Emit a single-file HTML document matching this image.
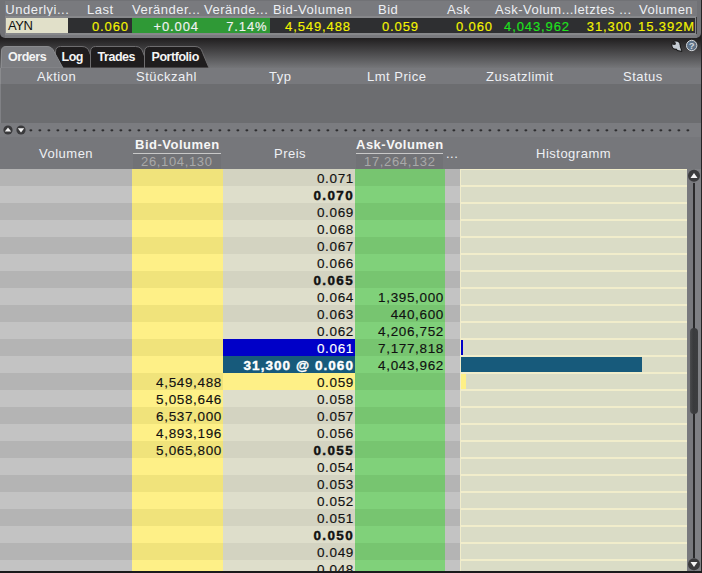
<!DOCTYPE html><html><head><meta charset="utf-8"><style>
*{margin:0;padding:0;box-sizing:border-box}
html,body{width:702px;height:573px;overflow:hidden;background:#1b1b1c}
body{position:relative;font-family:"Liberation Sans",sans-serif;font-size:13px}
.a{position:absolute;white-space:nowrap}
.lbl{color:#eef0f4;letter-spacing:0.5px}
.num{letter-spacing:0.9px}
.bk{font-size:13.5px;letter-spacing:0.65px;-webkit-text-stroke:0.15px currentColor}
.r{text-align:right}
.c{text-align:center}
</style></head><body>
<div class="a" style="left:0;top:0;width:702px;height:68px;background:linear-gradient(#201e1f 0px,#201e1f 38px,#757679 68px)"></div>
<div class="a" style="left:0;top:0;width:701px;height:38px;background:#717276;border-radius:0 0 5px 5px;overflow:hidden"><div class="a" style="left:5px;top:1px;width:692px;height:37px;background:#797a7e"></div></div>
<div class="a lbl" style="left:5.3px;top:1px;line-height:17px">Underlyi...</div>
<div class="a lbl" style="left:87px;top:1px;line-height:17px">Last</div>
<div class="a lbl" style="left:132px;top:1px;line-height:17px">Veränder...</div>
<div class="a lbl" style="left:204px;top:1px;line-height:17px">Verände...</div>
<div class="a lbl" style="left:273px;top:1px;line-height:17px">Bid-Volumen</div>
<div class="a lbl" style="left:378px;top:1px;line-height:17px">Bid</div>
<div class="a lbl" style="left:447px;top:1px;line-height:17px">Ask</div>
<div class="a lbl" style="left:495px;top:1px;line-height:17px">Ask-Volum...</div>
<div class="a lbl" style="left:574px;top:1px;line-height:17px">letztes ...</div>
<div class="a lbl" style="left:639px;top:1px;line-height:17px">Volumen</div>
<div class="a" style="left:5px;top:16px;width:691px;height:19px;background:#87888b"></div>
<div class="a" style="left:696px;top:17px;width:1px;height:17px;background:#3a3a3c"></div>
<div class="a" style="left:6px;top:18px;width:62px;height:15px;background:#e1e0c9"></div>
<div class="a" style="left:68px;top:18px;width:64px;height:15px;background:#2e2f31"></div>
<div class="a" style="left:132px;top:18px;width:138px;height:15px;background:#2f9936"></div>
<div class="a" style="left:270px;top:18px;width:425px;height:15px;background:#2e2f31"></div>
<div class="a" style="left:8px;top:18px;line-height:15px;color:#111;letter-spacing:-0.4px">AYN</div>
<div class="a num r" style="right:573px;top:19px;line-height:15px;color:#f4f400;-webkit-text-stroke:0.15px #f4f400">0.060</div>
<div class="a num r" style="right:503px;top:19px;line-height:15px;color:#f2f2f2;-webkit-text-stroke:0.15px #f2f2f2">+0.004</div>
<div class="a num r" style="right:434.5px;top:19px;line-height:15px;color:#f2f2f2;-webkit-text-stroke:0.15px #f2f2f2">7.14%</div>
<div class="a num r" style="right:351px;top:19px;line-height:15px;color:#f4f400;-webkit-text-stroke:0.15px #f4f400">4,549,488</div>
<div class="a num r" style="right:283px;top:19px;line-height:15px;color:#f4f400;-webkit-text-stroke:0.15px #f4f400">0.059</div>
<div class="a num r" style="right:209px;top:19px;line-height:15px;color:#f4f400;-webkit-text-stroke:0.15px #f4f400">0.060</div>
<div class="a num r" style="right:132px;top:19px;line-height:15px;color:#1ee21e;-webkit-text-stroke:0.15px #1ee21e">4,043,962</div>
<div class="a num r" style="right:70px;top:19px;line-height:15px;color:#f4f400;-webkit-text-stroke:0.15px #f4f400">31,300</div>
<div class="a num r" style="right:7px;top:19px;line-height:15px;color:#f4f400;-webkit-text-stroke:0.15px #f4f400">15.392M</div>
<svg class="a" style="left:0;top:0" width="702" height="70"><path d="M55.5,68 L55.5,52 Q55.5,46.5 60.5,46.5 L82,46.5 Q88,46.5 89.5,52.5 L96,68 Z" fill="#1f1d1e" stroke="#6e6d6f" stroke-width="1"/><path d="M90.5,68 L90.5,52 Q90.5,46.5 95.5,46.5 L135.5,46.5 Q141.5,46.5 143.0,52.5 L149.5,68 Z" fill="#1f1d1e" stroke="#6e6d6f" stroke-width="1"/><path d="M144.5,68 L144.5,52 Q144.5,46.5 149.5,46.5 L195,46.5 Q201,46.5 202.5,52.5 L209,68 Z" fill="#1f1d1e" stroke="#6e6d6f" stroke-width="1"/><path d="M1.5,68 L1.5,51 Q1.5,46.5 6,46.5 L47,46.5 Q52,46.5 54,51.5 L63,68 Z" fill="#7b7c80" stroke="#8a8b8e" stroke-width="1"/></svg>
<div class="a" style="left:8px;top:49px;line-height:17px;font-size:12.5px;letter-spacing:-0.45px;color:#f4f4f4;font-weight:bold">Orders</div>
<div class="a" style="left:61.5px;top:49px;line-height:17px;font-size:12.5px;letter-spacing:-0.45px;color:#f4f4f4;font-weight:bold">Log</div>
<div class="a" style="left:97.5px;top:49px;line-height:17px;font-size:12.5px;letter-spacing:-0.45px;color:#f4f4f4;font-weight:bold">Trades</div>
<div class="a" style="left:151.5px;top:49px;line-height:17px;font-size:12.5px;letter-spacing:-0.45px;color:#f4f4f4;font-weight:bold">Portfolio</div>
<svg class="a" style="left:666px;top:36px" width="36" height="20"><g stroke="#161616" stroke-width="1.6" stroke-linejoin="round"><circle cx="10" cy="9.2" r="3.8" fill="#161616"/><path d="M9.5,10.5 L13.2,9 L15.5,15 L11.5,14.2 Z" fill="#161616"/></g><circle cx="10" cy="9.2" r="3.6" fill="#c5ccd3"/><path d="M9.5,10.5 L13.2,9 L15.3,14.8 L11.5,14.1 Z" fill="#c5ccd3"/><circle cx="8.2" cy="7.4" r="1.7" fill="#262526"/><path d="M5.5,5.2 L8.2,7.4 L6,8.5 Z" fill="#262526"/><circle cx="25.7" cy="9.5" r="5.2" fill="#5d7187" stroke="#d6d8da" stroke-width="1"/><text x="25.7" y="13" text-anchor="middle" font-family="Liberation Sans" font-weight="bold" font-size="9.5" fill="#cfd6de">?</text></svg>
<div class="a" style="left:0;top:68px;width:702px;height:16px;background:#78797d;border-left:1px solid #8a8b8e"></div>
<div class="a lbl" style="left:37px;top:69px;line-height:16px">Aktion</div>
<div class="a lbl" style="left:136px;top:69px;line-height:16px">Stückzahl</div>
<div class="a lbl" style="left:269px;top:69px;line-height:16px">Typ</div>
<div class="a lbl" style="left:367px;top:69px;line-height:16px">Lmt Price</div>
<div class="a lbl" style="left:486px;top:69px;line-height:16px">Zusatzlimit</div>
<div class="a lbl" style="left:623px;top:69px;line-height:16px">Status</div>
<div class="a" style="left:0;top:84px;width:702px;height:39px;background:#6c6d70;border-left:1px solid #808185"></div>
<div class="a" style="left:0;top:123px;width:702px;height:14px;background:#7b7c80"></div>
<svg class="a" style="left:2.5px;top:124.7px" width="10" height="10"><circle cx="5" cy="5" r="4.6" fill="#3a3a3c"/><path transform="translate(5,5)" d="M-3.2,1.6 L3.2,1.6 L0,-2.6 Z" fill="#f4f4f4"/></svg>
<svg class="a" style="left:15.5px;top:124.7px" width="10" height="10"><circle cx="5" cy="5" r="4.6" fill="#3a3a3c"/><path transform="translate(5,5)" d="M-3.2,-1.8 L3.2,-1.8 L0,2.4 Z" fill="#f4f4f4"/></svg>
<svg class="a" style="left:0;top:0" width="702" height="140"><ellipse cx="30.9" cy="130.3" rx="1.5" ry="1.1" fill="#2e2e30"/><ellipse cx="39.9" cy="130.3" rx="1.5" ry="1.1" fill="#2e2e30"/><ellipse cx="48.9" cy="130.3" rx="1.5" ry="1.1" fill="#2e2e30"/><ellipse cx="57.9" cy="130.3" rx="1.5" ry="1.1" fill="#2e2e30"/><ellipse cx="66.9" cy="130.3" rx="1.5" ry="1.1" fill="#2e2e30"/><ellipse cx="75.9" cy="130.3" rx="1.5" ry="1.1" fill="#2e2e30"/><ellipse cx="84.9" cy="130.3" rx="1.5" ry="1.1" fill="#2e2e30"/><ellipse cx="93.9" cy="130.3" rx="1.5" ry="1.1" fill="#2e2e30"/><ellipse cx="102.9" cy="130.3" rx="1.5" ry="1.1" fill="#2e2e30"/><ellipse cx="111.9" cy="130.3" rx="1.5" ry="1.1" fill="#2e2e30"/><ellipse cx="120.9" cy="130.3" rx="1.5" ry="1.1" fill="#2e2e30"/><ellipse cx="129.9" cy="130.3" rx="1.5" ry="1.1" fill="#2e2e30"/><ellipse cx="138.9" cy="130.3" rx="1.5" ry="1.1" fill="#2e2e30"/><ellipse cx="147.9" cy="130.3" rx="1.5" ry="1.1" fill="#2e2e30"/><ellipse cx="156.9" cy="130.3" rx="1.5" ry="1.1" fill="#2e2e30"/><ellipse cx="165.9" cy="130.3" rx="1.5" ry="1.1" fill="#2e2e30"/><ellipse cx="174.9" cy="130.3" rx="1.5" ry="1.1" fill="#2e2e30"/><ellipse cx="183.9" cy="130.3" rx="1.5" ry="1.1" fill="#2e2e30"/><ellipse cx="192.9" cy="130.3" rx="1.5" ry="1.1" fill="#2e2e30"/><ellipse cx="201.9" cy="130.3" rx="1.5" ry="1.1" fill="#2e2e30"/><ellipse cx="210.9" cy="130.3" rx="1.5" ry="1.1" fill="#2e2e30"/><ellipse cx="219.9" cy="130.3" rx="1.5" ry="1.1" fill="#2e2e30"/><ellipse cx="228.9" cy="130.3" rx="1.5" ry="1.1" fill="#2e2e30"/><ellipse cx="237.9" cy="130.3" rx="1.5" ry="1.1" fill="#2e2e30"/><ellipse cx="246.9" cy="130.3" rx="1.5" ry="1.1" fill="#2e2e30"/><ellipse cx="255.9" cy="130.3" rx="1.5" ry="1.1" fill="#2e2e30"/><ellipse cx="264.9" cy="130.3" rx="1.5" ry="1.1" fill="#2e2e30"/><ellipse cx="273.9" cy="130.3" rx="1.5" ry="1.1" fill="#2e2e30"/><ellipse cx="282.9" cy="130.3" rx="1.5" ry="1.1" fill="#2e2e30"/><ellipse cx="291.9" cy="130.3" rx="1.5" ry="1.1" fill="#2e2e30"/><ellipse cx="300.9" cy="130.3" rx="1.5" ry="1.1" fill="#2e2e30"/><ellipse cx="309.9" cy="130.3" rx="1.5" ry="1.1" fill="#2e2e30"/><ellipse cx="318.9" cy="130.3" rx="1.5" ry="1.1" fill="#2e2e30"/><ellipse cx="327.9" cy="130.3" rx="1.5" ry="1.1" fill="#2e2e30"/><ellipse cx="336.9" cy="130.3" rx="1.5" ry="1.1" fill="#2e2e30"/><ellipse cx="345.9" cy="130.3" rx="1.5" ry="1.1" fill="#2e2e30"/><ellipse cx="354.9" cy="130.3" rx="1.5" ry="1.1" fill="#2e2e30"/><ellipse cx="363.9" cy="130.3" rx="1.5" ry="1.1" fill="#2e2e30"/><ellipse cx="372.9" cy="130.3" rx="1.5" ry="1.1" fill="#2e2e30"/><ellipse cx="381.9" cy="130.3" rx="1.5" ry="1.1" fill="#2e2e30"/><ellipse cx="390.9" cy="130.3" rx="1.5" ry="1.1" fill="#2e2e30"/><ellipse cx="399.9" cy="130.3" rx="1.5" ry="1.1" fill="#2e2e30"/><ellipse cx="408.9" cy="130.3" rx="1.5" ry="1.1" fill="#2e2e30"/><ellipse cx="417.9" cy="130.3" rx="1.5" ry="1.1" fill="#2e2e30"/><ellipse cx="426.9" cy="130.3" rx="1.5" ry="1.1" fill="#2e2e30"/><ellipse cx="435.9" cy="130.3" rx="1.5" ry="1.1" fill="#2e2e30"/><ellipse cx="444.9" cy="130.3" rx="1.5" ry="1.1" fill="#2e2e30"/><ellipse cx="453.9" cy="130.3" rx="1.5" ry="1.1" fill="#2e2e30"/><ellipse cx="462.9" cy="130.3" rx="1.5" ry="1.1" fill="#2e2e30"/><ellipse cx="471.9" cy="130.3" rx="1.5" ry="1.1" fill="#2e2e30"/><ellipse cx="480.9" cy="130.3" rx="1.5" ry="1.1" fill="#2e2e30"/><ellipse cx="489.9" cy="130.3" rx="1.5" ry="1.1" fill="#2e2e30"/><ellipse cx="498.9" cy="130.3" rx="1.5" ry="1.1" fill="#2e2e30"/><ellipse cx="507.9" cy="130.3" rx="1.5" ry="1.1" fill="#2e2e30"/><ellipse cx="516.9" cy="130.3" rx="1.5" ry="1.1" fill="#2e2e30"/><ellipse cx="525.9" cy="130.3" rx="1.5" ry="1.1" fill="#2e2e30"/><ellipse cx="534.9" cy="130.3" rx="1.5" ry="1.1" fill="#2e2e30"/><ellipse cx="543.9" cy="130.3" rx="1.5" ry="1.1" fill="#2e2e30"/><ellipse cx="552.9" cy="130.3" rx="1.5" ry="1.1" fill="#2e2e30"/><ellipse cx="561.9" cy="130.3" rx="1.5" ry="1.1" fill="#2e2e30"/><ellipse cx="570.9" cy="130.3" rx="1.5" ry="1.1" fill="#2e2e30"/><ellipse cx="579.9" cy="130.3" rx="1.5" ry="1.1" fill="#2e2e30"/><ellipse cx="588.9" cy="130.3" rx="1.5" ry="1.1" fill="#2e2e30"/><ellipse cx="597.9" cy="130.3" rx="1.5" ry="1.1" fill="#2e2e30"/><ellipse cx="606.9" cy="130.3" rx="1.5" ry="1.1" fill="#2e2e30"/><ellipse cx="615.9" cy="130.3" rx="1.5" ry="1.1" fill="#2e2e30"/><ellipse cx="624.9" cy="130.3" rx="1.5" ry="1.1" fill="#2e2e30"/><ellipse cx="633.9" cy="130.3" rx="1.5" ry="1.1" fill="#2e2e30"/><ellipse cx="642.9" cy="130.3" rx="1.5" ry="1.1" fill="#2e2e30"/><ellipse cx="651.9" cy="130.3" rx="1.5" ry="1.1" fill="#2e2e30"/><ellipse cx="660.9" cy="130.3" rx="1.5" ry="1.1" fill="#2e2e30"/><ellipse cx="669.9" cy="130.3" rx="1.5" ry="1.1" fill="#2e2e30"/><ellipse cx="678.9" cy="130.3" rx="1.5" ry="1.1" fill="#2e2e30"/><ellipse cx="687.9" cy="130.3" rx="1.5" ry="1.1" fill="#2e2e30"/></svg>
<div class="a" style="left:0;top:137px;width:702px;height:32px;background:#76777b"></div>
<div class="a lbl" style="left:39px;top:146px;line-height:16px">Volumen</div>
<div class="a" style="left:135px;top:137px;line-height:16px;color:#f6f6f6;font-weight:bold;letter-spacing:0.5px">Bid-Volumen</div>
<div class="a" style="left:133px;top:153px;width:88px;height:1px;background:#c8c8c8"></div>
<div class="a" style="left:133px;top:154px;width:88px;height:15px;background:#717276"></div>
<div class="a num" style="left:141px;top:154px;line-height:15px;color:#a9a9a9;letter-spacing:0.65px">26,104,130</div>
<div class="a lbl" style="left:274px;top:146px;line-height:16px">Preis</div>
<div class="a" style="left:356px;top:137px;line-height:16px;color:#f6f6f6;font-weight:bold;letter-spacing:0.5px">Ask-Volumen</div>
<div class="a" style="left:356px;top:153px;width:87px;height:1px;background:#c8c8c8"></div>
<div class="a" style="left:356px;top:154px;width:87px;height:15px;background:#717276"></div>
<div class="a num" style="left:364px;top:154px;line-height:15px;color:#a9a9a9;letter-spacing:0.65px">17,264,132</div>
<div class="a lbl" style="left:446px;top:146px;line-height:16px">...</div>
<div class="a lbl" style="left:536px;top:146px;line-height:16px">Histogramm</div>
<div class="a" style="left:0;top:169px;width:132px;height:17px;background:#b4b4b4"></div>
<div class="a" style="left:132px;top:169px;width:91px;height:17px;background:#f0e37b"></div>
<div class="a" style="left:223px;top:169px;width:132px;height:17px;background:#d3d3c1"></div>
<div class="a" style="left:355px;top:169px;width:90px;height:17px;background:#77c570"></div>
<div class="a" style="left:445px;top:169px;width:15px;height:17px;background:#b4b4b4"></div>
<div class="a" style="left:460px;top:169px;width:227px;height:17px;background:#dadcc6;border:1px solid #f1edcb;border-right:none"></div>
<div class="a bk r" style="right:348px;top:170px;line-height:17px;color:#111;font-weight:normal;letter-spacing:0.65px;">0.071</div>
<div class="a" style="left:0;top:186px;width:132px;height:17px;background:#c3c3c3"></div>
<div class="a" style="left:132px;top:186px;width:91px;height:17px;background:#fef087"></div>
<div class="a" style="left:223px;top:186px;width:132px;height:17px;background:#dedecb"></div>
<div class="a" style="left:355px;top:186px;width:90px;height:17px;background:#80d17a"></div>
<div class="a" style="left:445px;top:186px;width:15px;height:17px;background:#c3c3c3"></div>
<div class="a" style="left:460px;top:186px;width:227px;height:17px;background:#dadcc6;border:1px solid #f1edcb;border-right:none"></div>
<div class="a bk r" style="right:348px;top:187px;line-height:17px;color:#111;font-weight:bold;letter-spacing:1.35px;-webkit-text-stroke:0.4px currentColor;">0.070</div>
<div class="a" style="left:0;top:203px;width:132px;height:17px;background:#b4b4b4"></div>
<div class="a" style="left:132px;top:203px;width:91px;height:17px;background:#f0e37b"></div>
<div class="a" style="left:223px;top:203px;width:132px;height:17px;background:#d3d3c1"></div>
<div class="a" style="left:355px;top:203px;width:90px;height:17px;background:#77c570"></div>
<div class="a" style="left:445px;top:203px;width:15px;height:17px;background:#b4b4b4"></div>
<div class="a" style="left:460px;top:203px;width:227px;height:17px;background:#dadcc6;border:1px solid #f1edcb;border-right:none"></div>
<div class="a bk r" style="right:348px;top:204px;line-height:17px;color:#111;font-weight:normal;letter-spacing:0.65px;">0.069</div>
<div class="a" style="left:0;top:220px;width:132px;height:17px;background:#c3c3c3"></div>
<div class="a" style="left:132px;top:220px;width:91px;height:17px;background:#fef087"></div>
<div class="a" style="left:223px;top:220px;width:132px;height:17px;background:#dedecb"></div>
<div class="a" style="left:355px;top:220px;width:90px;height:17px;background:#80d17a"></div>
<div class="a" style="left:445px;top:220px;width:15px;height:17px;background:#c3c3c3"></div>
<div class="a" style="left:460px;top:220px;width:227px;height:17px;background:#dadcc6;border:1px solid #f1edcb;border-right:none"></div>
<div class="a bk r" style="right:348px;top:221px;line-height:17px;color:#111;font-weight:normal;letter-spacing:0.65px;">0.068</div>
<div class="a" style="left:0;top:237px;width:132px;height:17px;background:#b4b4b4"></div>
<div class="a" style="left:132px;top:237px;width:91px;height:17px;background:#f0e37b"></div>
<div class="a" style="left:223px;top:237px;width:132px;height:17px;background:#d3d3c1"></div>
<div class="a" style="left:355px;top:237px;width:90px;height:17px;background:#77c570"></div>
<div class="a" style="left:445px;top:237px;width:15px;height:17px;background:#b4b4b4"></div>
<div class="a" style="left:460px;top:237px;width:227px;height:17px;background:#dadcc6;border:1px solid #f1edcb;border-right:none"></div>
<div class="a bk r" style="right:348px;top:238px;line-height:17px;color:#111;font-weight:normal;letter-spacing:0.65px;">0.067</div>
<div class="a" style="left:0;top:254px;width:132px;height:17px;background:#c3c3c3"></div>
<div class="a" style="left:132px;top:254px;width:91px;height:17px;background:#fef087"></div>
<div class="a" style="left:223px;top:254px;width:132px;height:17px;background:#dedecb"></div>
<div class="a" style="left:355px;top:254px;width:90px;height:17px;background:#80d17a"></div>
<div class="a" style="left:445px;top:254px;width:15px;height:17px;background:#c3c3c3"></div>
<div class="a" style="left:460px;top:254px;width:227px;height:17px;background:#dadcc6;border:1px solid #f1edcb;border-right:none"></div>
<div class="a bk r" style="right:348px;top:255px;line-height:17px;color:#111;font-weight:normal;letter-spacing:0.65px;">0.066</div>
<div class="a" style="left:0;top:271px;width:132px;height:17px;background:#b4b4b4"></div>
<div class="a" style="left:132px;top:271px;width:91px;height:17px;background:#f0e37b"></div>
<div class="a" style="left:223px;top:271px;width:132px;height:17px;background:#d3d3c1"></div>
<div class="a" style="left:355px;top:271px;width:90px;height:17px;background:#77c570"></div>
<div class="a" style="left:445px;top:271px;width:15px;height:17px;background:#b4b4b4"></div>
<div class="a" style="left:460px;top:271px;width:227px;height:17px;background:#dadcc6;border:1px solid #f1edcb;border-right:none"></div>
<div class="a bk r" style="right:348px;top:272px;line-height:17px;color:#111;font-weight:bold;letter-spacing:1.35px;-webkit-text-stroke:0.4px currentColor;">0.065</div>
<div class="a" style="left:0;top:288px;width:132px;height:17px;background:#c3c3c3"></div>
<div class="a" style="left:132px;top:288px;width:91px;height:17px;background:#fef087"></div>
<div class="a" style="left:223px;top:288px;width:132px;height:17px;background:#dedecb"></div>
<div class="a" style="left:355px;top:288px;width:90px;height:17px;background:#80d17a"></div>
<div class="a" style="left:445px;top:288px;width:15px;height:17px;background:#c3c3c3"></div>
<div class="a" style="left:460px;top:288px;width:227px;height:17px;background:#dadcc6;border:1px solid #f1edcb;border-right:none"></div>
<div class="a bk r" style="right:348px;top:289px;line-height:17px;color:#111;font-weight:normal;letter-spacing:0.65px;">0.064</div>
<div class="a bk r" style="right:258px;top:289px;line-height:17px;color:#111">1,395,000</div>
<div class="a" style="left:0;top:305px;width:132px;height:17px;background:#b4b4b4"></div>
<div class="a" style="left:132px;top:305px;width:91px;height:17px;background:#f0e37b"></div>
<div class="a" style="left:223px;top:305px;width:132px;height:17px;background:#d3d3c1"></div>
<div class="a" style="left:355px;top:305px;width:90px;height:17px;background:#77c570"></div>
<div class="a" style="left:445px;top:305px;width:15px;height:17px;background:#b4b4b4"></div>
<div class="a" style="left:460px;top:305px;width:227px;height:17px;background:#dadcc6;border:1px solid #f1edcb;border-right:none"></div>
<div class="a bk r" style="right:348px;top:306px;line-height:17px;color:#111;font-weight:normal;letter-spacing:0.65px;">0.063</div>
<div class="a bk r" style="right:258px;top:306px;line-height:17px;color:#111">440,600</div>
<div class="a" style="left:0;top:322px;width:132px;height:17px;background:#c3c3c3"></div>
<div class="a" style="left:132px;top:322px;width:91px;height:17px;background:#fef087"></div>
<div class="a" style="left:223px;top:322px;width:132px;height:17px;background:#dedecb"></div>
<div class="a" style="left:355px;top:322px;width:90px;height:17px;background:#80d17a"></div>
<div class="a" style="left:445px;top:322px;width:15px;height:17px;background:#c3c3c3"></div>
<div class="a" style="left:460px;top:322px;width:227px;height:17px;background:#dadcc6;border:1px solid #f1edcb;border-right:none"></div>
<div class="a bk r" style="right:348px;top:323px;line-height:17px;color:#111;font-weight:normal;letter-spacing:0.65px;">0.062</div>
<div class="a bk r" style="right:258px;top:323px;line-height:17px;color:#111">4,206,752</div>
<div class="a" style="left:0;top:339px;width:132px;height:17px;background:#b4b4b4"></div>
<div class="a" style="left:132px;top:339px;width:91px;height:17px;background:#f0e37b"></div>
<div class="a" style="left:223px;top:339px;width:132px;height:17px;background:#0000c8"></div>
<div class="a" style="left:355px;top:339px;width:90px;height:17px;background:#77c570"></div>
<div class="a" style="left:445px;top:339px;width:15px;height:17px;background:#b4b4b4"></div>
<div class="a" style="left:460px;top:339px;width:227px;height:17px;background:#dadcc6;border:1px solid #f1edcb;border-right:none"></div>
<div class="a bk r" style="right:348px;top:340px;line-height:17px;color:#fff;font-weight:normal;letter-spacing:0.65px;">0.061</div>
<div class="a bk r" style="right:258px;top:340px;line-height:17px;color:#111">7,177,818</div>
<div class="a" style="left:0;top:356px;width:132px;height:17px;background:#c3c3c3"></div>
<div class="a" style="left:132px;top:356px;width:91px;height:17px;background:#fef087"></div>
<div class="a" style="left:223px;top:356px;width:132px;height:17px;background:#175a7b"></div>
<div class="a" style="left:355px;top:356px;width:90px;height:17px;background:#80d17a"></div>
<div class="a" style="left:445px;top:356px;width:15px;height:17px;background:#c3c3c3"></div>
<div class="a" style="left:460px;top:356px;width:227px;height:17px;background:#dadcc6;border:1px solid #f1edcb;border-right:none"></div>
<div class="a bk r" style="right:348px;top:357px;line-height:17px;color:#fff;font-weight:bold;letter-spacing:1.05px;-webkit-text-stroke:0.4px currentColor;">31,300 @ 0.060</div>
<div class="a bk r" style="right:258px;top:357px;line-height:17px;color:#111">4,043,962</div>
<div class="a" style="left:0;top:373px;width:132px;height:17px;background:#b4b4b4"></div>
<div class="a" style="left:132px;top:373px;width:91px;height:17px;background:#f0e37b"></div>
<div class="a" style="left:223px;top:373px;width:132px;height:17px;background:#fef087"></div>
<div class="a" style="left:355px;top:373px;width:90px;height:17px;background:#77c570"></div>
<div class="a" style="left:445px;top:373px;width:15px;height:17px;background:#b4b4b4"></div>
<div class="a" style="left:460px;top:373px;width:227px;height:17px;background:#dadcc6;border:1px solid #f1edcb;border-right:none"></div>
<div class="a bk r" style="right:348px;top:374px;line-height:17px;color:#111;font-weight:normal;letter-spacing:0.65px;">0.059</div>
<div class="a bk r" style="right:480px;top:374px;line-height:17px;color:#111">4,549,488</div>
<div class="a" style="left:0;top:390px;width:132px;height:17px;background:#c3c3c3"></div>
<div class="a" style="left:132px;top:390px;width:91px;height:17px;background:#fef087"></div>
<div class="a" style="left:223px;top:390px;width:132px;height:17px;background:#dedecb"></div>
<div class="a" style="left:355px;top:390px;width:90px;height:17px;background:#80d17a"></div>
<div class="a" style="left:445px;top:390px;width:15px;height:17px;background:#c3c3c3"></div>
<div class="a" style="left:460px;top:390px;width:227px;height:17px;background:#dadcc6;border:1px solid #f1edcb;border-right:none"></div>
<div class="a bk r" style="right:348px;top:391px;line-height:17px;color:#111;font-weight:normal;letter-spacing:0.65px;">0.058</div>
<div class="a bk r" style="right:480px;top:391px;line-height:17px;color:#111">5,058,646</div>
<div class="a" style="left:0;top:407px;width:132px;height:17px;background:#b4b4b4"></div>
<div class="a" style="left:132px;top:407px;width:91px;height:17px;background:#f0e37b"></div>
<div class="a" style="left:223px;top:407px;width:132px;height:17px;background:#d3d3c1"></div>
<div class="a" style="left:355px;top:407px;width:90px;height:17px;background:#77c570"></div>
<div class="a" style="left:445px;top:407px;width:15px;height:17px;background:#b4b4b4"></div>
<div class="a" style="left:460px;top:407px;width:227px;height:17px;background:#dadcc6;border:1px solid #f1edcb;border-right:none"></div>
<div class="a bk r" style="right:348px;top:408px;line-height:17px;color:#111;font-weight:normal;letter-spacing:0.65px;">0.057</div>
<div class="a bk r" style="right:480px;top:408px;line-height:17px;color:#111">6,537,000</div>
<div class="a" style="left:0;top:424px;width:132px;height:17px;background:#c3c3c3"></div>
<div class="a" style="left:132px;top:424px;width:91px;height:17px;background:#fef087"></div>
<div class="a" style="left:223px;top:424px;width:132px;height:17px;background:#dedecb"></div>
<div class="a" style="left:355px;top:424px;width:90px;height:17px;background:#80d17a"></div>
<div class="a" style="left:445px;top:424px;width:15px;height:17px;background:#c3c3c3"></div>
<div class="a" style="left:460px;top:424px;width:227px;height:17px;background:#dadcc6;border:1px solid #f1edcb;border-right:none"></div>
<div class="a bk r" style="right:348px;top:425px;line-height:17px;color:#111;font-weight:normal;letter-spacing:0.65px;">0.056</div>
<div class="a bk r" style="right:480px;top:425px;line-height:17px;color:#111">4,893,196</div>
<div class="a" style="left:0;top:441px;width:132px;height:17px;background:#b4b4b4"></div>
<div class="a" style="left:132px;top:441px;width:91px;height:17px;background:#f0e37b"></div>
<div class="a" style="left:223px;top:441px;width:132px;height:17px;background:#d3d3c1"></div>
<div class="a" style="left:355px;top:441px;width:90px;height:17px;background:#77c570"></div>
<div class="a" style="left:445px;top:441px;width:15px;height:17px;background:#b4b4b4"></div>
<div class="a" style="left:460px;top:441px;width:227px;height:17px;background:#dadcc6;border:1px solid #f1edcb;border-right:none"></div>
<div class="a bk r" style="right:348px;top:442px;line-height:17px;color:#111;font-weight:bold;letter-spacing:1.35px;-webkit-text-stroke:0.4px currentColor;">0.055</div>
<div class="a bk r" style="right:480px;top:442px;line-height:17px;color:#111">5,065,800</div>
<div class="a" style="left:0;top:458px;width:132px;height:17px;background:#c3c3c3"></div>
<div class="a" style="left:132px;top:458px;width:91px;height:17px;background:#fef087"></div>
<div class="a" style="left:223px;top:458px;width:132px;height:17px;background:#dedecb"></div>
<div class="a" style="left:355px;top:458px;width:90px;height:17px;background:#80d17a"></div>
<div class="a" style="left:445px;top:458px;width:15px;height:17px;background:#c3c3c3"></div>
<div class="a" style="left:460px;top:458px;width:227px;height:17px;background:#dadcc6;border:1px solid #f1edcb;border-right:none"></div>
<div class="a bk r" style="right:348px;top:459px;line-height:17px;color:#111;font-weight:normal;letter-spacing:0.65px;">0.054</div>
<div class="a" style="left:0;top:475px;width:132px;height:17px;background:#b4b4b4"></div>
<div class="a" style="left:132px;top:475px;width:91px;height:17px;background:#f0e37b"></div>
<div class="a" style="left:223px;top:475px;width:132px;height:17px;background:#d3d3c1"></div>
<div class="a" style="left:355px;top:475px;width:90px;height:17px;background:#77c570"></div>
<div class="a" style="left:445px;top:475px;width:15px;height:17px;background:#b4b4b4"></div>
<div class="a" style="left:460px;top:475px;width:227px;height:17px;background:#dadcc6;border:1px solid #f1edcb;border-right:none"></div>
<div class="a bk r" style="right:348px;top:476px;line-height:17px;color:#111;font-weight:normal;letter-spacing:0.65px;">0.053</div>
<div class="a" style="left:0;top:492px;width:132px;height:17px;background:#c3c3c3"></div>
<div class="a" style="left:132px;top:492px;width:91px;height:17px;background:#fef087"></div>
<div class="a" style="left:223px;top:492px;width:132px;height:17px;background:#dedecb"></div>
<div class="a" style="left:355px;top:492px;width:90px;height:17px;background:#80d17a"></div>
<div class="a" style="left:445px;top:492px;width:15px;height:17px;background:#c3c3c3"></div>
<div class="a" style="left:460px;top:492px;width:227px;height:17px;background:#dadcc6;border:1px solid #f1edcb;border-right:none"></div>
<div class="a bk r" style="right:348px;top:493px;line-height:17px;color:#111;font-weight:normal;letter-spacing:0.65px;">0.052</div>
<div class="a" style="left:0;top:509px;width:132px;height:17px;background:#b4b4b4"></div>
<div class="a" style="left:132px;top:509px;width:91px;height:17px;background:#f0e37b"></div>
<div class="a" style="left:223px;top:509px;width:132px;height:17px;background:#d3d3c1"></div>
<div class="a" style="left:355px;top:509px;width:90px;height:17px;background:#77c570"></div>
<div class="a" style="left:445px;top:509px;width:15px;height:17px;background:#b4b4b4"></div>
<div class="a" style="left:460px;top:509px;width:227px;height:17px;background:#dadcc6;border:1px solid #f1edcb;border-right:none"></div>
<div class="a bk r" style="right:348px;top:510px;line-height:17px;color:#111;font-weight:normal;letter-spacing:0.65px;">0.051</div>
<div class="a" style="left:0;top:526px;width:132px;height:17px;background:#c3c3c3"></div>
<div class="a" style="left:132px;top:526px;width:91px;height:17px;background:#fef087"></div>
<div class="a" style="left:223px;top:526px;width:132px;height:17px;background:#dedecb"></div>
<div class="a" style="left:355px;top:526px;width:90px;height:17px;background:#80d17a"></div>
<div class="a" style="left:445px;top:526px;width:15px;height:17px;background:#c3c3c3"></div>
<div class="a" style="left:460px;top:526px;width:227px;height:17px;background:#dadcc6;border:1px solid #f1edcb;border-right:none"></div>
<div class="a bk r" style="right:348px;top:527px;line-height:17px;color:#111;font-weight:bold;letter-spacing:1.35px;-webkit-text-stroke:0.4px currentColor;">0.050</div>
<div class="a" style="left:0;top:543px;width:132px;height:17px;background:#b4b4b4"></div>
<div class="a" style="left:132px;top:543px;width:91px;height:17px;background:#f0e37b"></div>
<div class="a" style="left:223px;top:543px;width:132px;height:17px;background:#d3d3c1"></div>
<div class="a" style="left:355px;top:543px;width:90px;height:17px;background:#77c570"></div>
<div class="a" style="left:445px;top:543px;width:15px;height:17px;background:#b4b4b4"></div>
<div class="a" style="left:460px;top:543px;width:227px;height:17px;background:#dadcc6;border:1px solid #f1edcb;border-right:none"></div>
<div class="a bk r" style="right:348px;top:544px;line-height:17px;color:#111;font-weight:normal;letter-spacing:0.65px;">0.049</div>
<div class="a" style="left:0;top:560px;width:132px;height:17px;background:#c3c3c3"></div>
<div class="a" style="left:132px;top:560px;width:91px;height:17px;background:#fef087"></div>
<div class="a" style="left:223px;top:560px;width:132px;height:17px;background:#dedecb"></div>
<div class="a" style="left:355px;top:560px;width:90px;height:17px;background:#80d17a"></div>
<div class="a" style="left:445px;top:560px;width:15px;height:17px;background:#c3c3c3"></div>
<div class="a" style="left:460px;top:560px;width:227px;height:17px;background:#dadcc6;border:1px solid #f1edcb;border-right:none"></div>
<div class="a bk r" style="right:348px;top:561px;line-height:17px;color:#111;font-weight:normal;letter-spacing:0.65px;">0.048</div>
<div class="a" style="left:461px;top:340px;width:1.5px;height:15px;background:#0000c8"></div>
<div class="a" style="left:461px;top:357px;width:181px;height:15px;background:#175a7b"></div>
<div class="a" style="left:461px;top:374px;width:5px;height:15px;background:#fef087"></div>
<div class="a" style="left:687px;top:169px;width:14px;height:402px;background:#78797d"></div>
<div class="a" style="left:695px;top:169px;width:6px;height:402px;background:#7f8084"></div>
<div class="a" style="left:693px;top:183px;width:2px;height:375px;background:#2a2a2b"></div>
<div class="a" style="left:689.5px;top:328px;width:8.5px;height:86px;border-radius:4.25px;background:linear-gradient(90deg,#4a4b4d,#3a3b3d 40%,#3c3d3f)"></div>
<svg class="a" style="left:687px;top:169px" width="14" height="14"><circle cx="7" cy="6.7" r="6" fill="#3a3a3c"/><path d="M3.5,9 L10.5,9 L7,3.9 Z" fill="#f4f4f4"/></svg>
<svg class="a" style="left:687px;top:557px" width="14" height="14"><circle cx="7" cy="7.2" r="6" fill="#3a3a3c"/><path d="M3.5,5 L10.5,5 L7,10 Z" fill="#f4f4f4"/></svg>
<div class="a" style="left:701px;top:0;width:1px;height:573px;background:#262425"></div>
<div class="a" style="left:0;top:571px;width:702px;height:2px;background:#1b1b1c"></div>
</body></html>
